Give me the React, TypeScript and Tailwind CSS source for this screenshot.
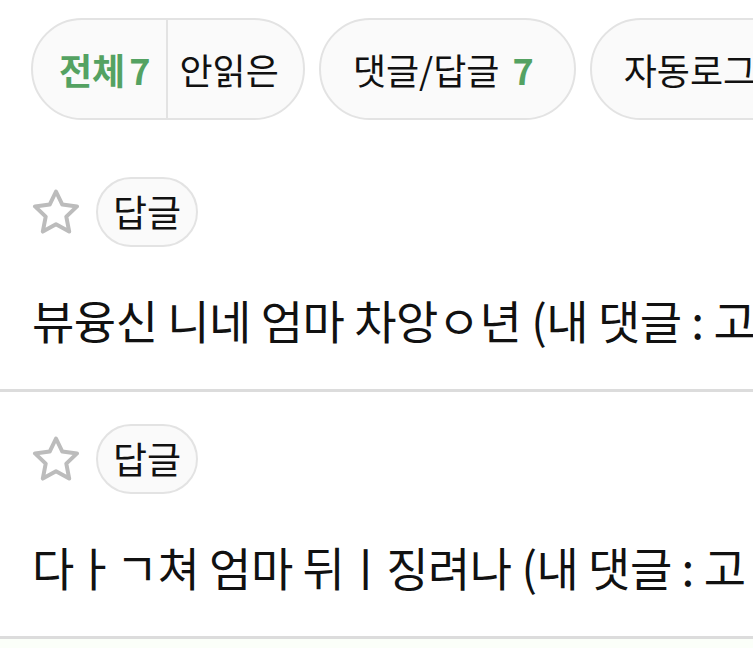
const font = { fontFamily: '"Noto Sans CJK KR", "Noto Sans", sans-serif' };

function StarIcon() {
  return (
    <svg width="48" height="46" viewBox="0 0 48 46" fill="none" className="shrink-0">
      <path
        d="M24 2.5 L30.3 15.6 L45 17.4 L34.3 27.6 L37.2 42.6 L24 35.3 L10.8 42.6 L13.7 27.6 L3 17.4 L17.7 15.6 Z"
        stroke="#bcbcbc"
        strokeWidth="4"
        strokeLinejoin="round"
      />
    </svg>
  );
}

function Row({ text }: { text: string }) {
  return (
    <div className="border-b-[3px] border-[#dcdcdc] bg-white px-8 pt-8 pb-[40px]">
      <div className="flex items-center gap-4">
        <StarIcon />
        <span className="flex h-[70px] items-center rounded-full border-2 border-[#e3e3e3] bg-[#fafafa] px-[15px] text-[37px] text-[#111]">
          답글
        </span>
      </div>
      <p className="mt-[42px] whitespace-nowrap text-[46px] leading-[60px] tracking-[-0.5px] text-[#111]">{text}</p>
    </div>
  );
}

export default function App() {
  return (
    <div className="min-h-screen w-[753px] overflow-hidden bg-[#fbfff9]" style={font}>
      <div className="flex gap-[14px] whitespace-nowrap bg-white pl-[31px] pt-[18px] pb-[25px]">
        <div className="flex h-[102px] shrink-0 items-center rounded-full border-2 border-[#e3e3e3] bg-[#fafafa] text-[36px]">
          <span className="flex h-full items-center pl-[26px] pr-[15px] font-bold text-[#54a262]">
            전체<span className="ml-[4px]">7</span>
          </span>
          <span className="h-full w-[2px] bg-[#e3e3e3]" />
          <span className="flex h-full items-center pl-[12px] pr-[24px] text-[#111]">안읽은</span>
        </div>
        <div className="flex h-[102px] shrink-0 items-center rounded-full border-2 border-[#e3e3e3] bg-[#fafafa] pl-8 pr-10 text-[36px] text-[#111]">
          댓글/답글<span className="ml-[13px] font-bold text-[#54a262]">7</span>
        </div>
        <div className="flex h-[102px] shrink-0 items-center rounded-full border-2 border-[#e3e3e3] bg-[#fafafa] px-8 text-[36px] text-[#111]">
          자동로그인
        </div>
      </div>
      <Row text="뷰융신 니네 엄마 차앙ㅇ년 (내 댓글 : 고" />
      <Row text="다ㅏㄱ쳐 엄마 뒤ㅣ징려나 (내 댓글 : 고" />
    </div>
  );
}
